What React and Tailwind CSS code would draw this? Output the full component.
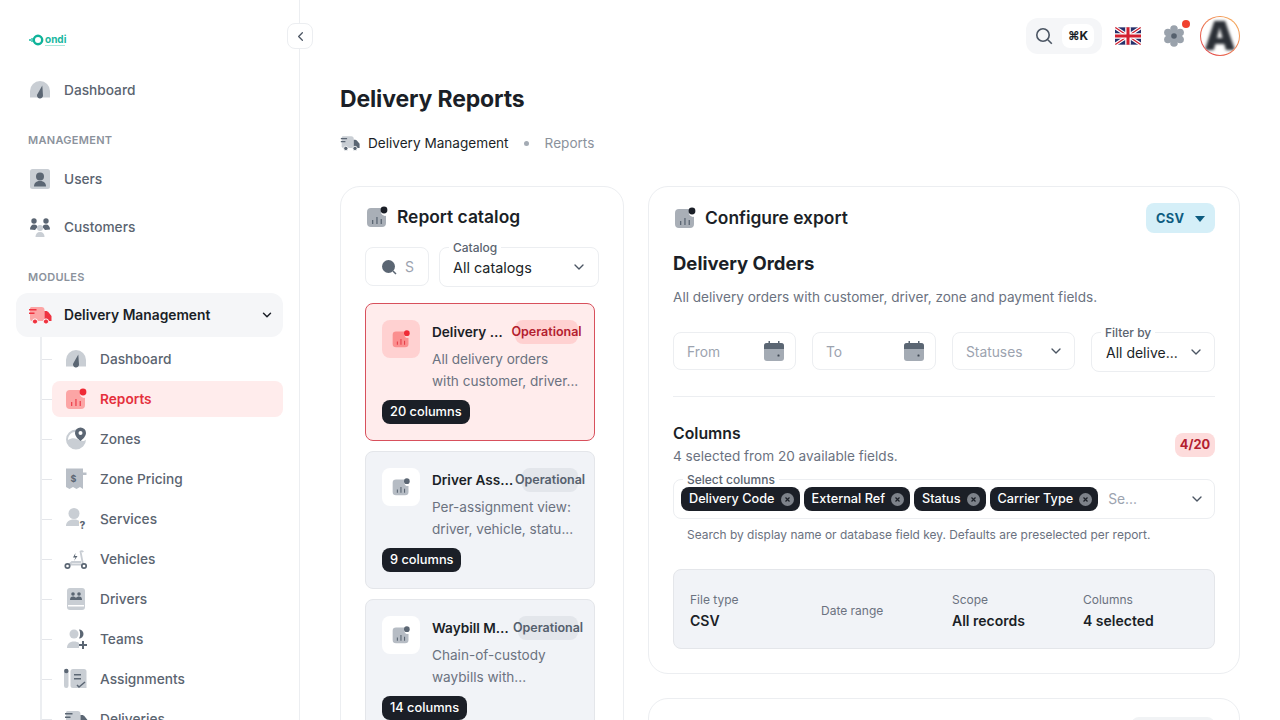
import React from "react";
import { ChevronLeft, ChevronDown } from "lucide-react";

const GaugeIcon = ({ light = "#c9ced4", dark = "#5b6673", size = 24 }) => (
  <svg width={size} height={size} viewBox="0 0 24 24">
    <path d="M2 19.500V13a10 10 0 0 1 20 0v6.500z" fill={light} />
    <path d="M14.300 7.500 15 17.500a3 3 0 1 1-5.800-1z" fill={dark} />
  </svg>
);

const UserCardIcon = () => (
  <svg width="24" height="24" viewBox="0 0 24 24">
    <rect x="2" y="2" width="20" height="20" rx="2.500" fill="#c9ced4" />
    <circle cx="12" cy="9.500" r="4" fill="#5b6673" />
    <path d="M6 19.500c0-3 1.500-5.500 6-5.500s6 2.500 6 5.500z" fill="#5b6673" />
  </svg>
);

const PeopleIcon = () => (
  <svg width="24" height="24" viewBox="0 0 24 24">
    <circle cx="6" cy="6" r="2.700" fill="#5b6673" />
    <circle cx="18" cy="6" r="2.700" fill="#5b6673" />
    <path d="M2 14.500c0-3 1.500-5 4-5s3 1 3.500 2.500L7 15z" fill="#5b6673" />
    <path d="M22 14.500c0-3-1.500-5-4-5s-3 1-3.500 2.500l2.500 3z" fill="#5b6673" />
    <circle cx="12" cy="13" r="3" fill="#c9ced4" />
    <path d="M7.500 22c0-3 1.500-5 4.500-5s4.500 2 4.500 5z" fill="#c9ced4" />
  </svg>
);

const TruckIcon = ({ light = "#c9ced4", dark = "#5b6673", size = 24 }) => (
  <svg width={size} height={size} viewBox="0 0 24 24">
    <path d="M3 4h10.500a3 3 0 0 1 3 3v11H4a2 2 0 0 1-2-2V5z" fill={light} />
    <path d="M16.500 8h1.500c1 0 2 .5 2.700 1.500L23.500 13v5h-7z" fill={dark} />
    <path d="M1 6h7.500v1.500H1zM1 9.500h5.500V11H1z" fill={dark} />
    <circle cx="7" cy="18.500" r="2.600" fill={dark} stroke="#ffffff" strokeWidth="1" />
    <circle cx="18" cy="18.500" r="2.600" fill={dark} stroke="#ffffff" strokeWidth="1" />
  </svg>
);

const ChartIcon = ({ light = "#a9afb7", dark = "#1b1f27", bar = "#5b6673", size = 24 }) => (
  <svg width={size} height={size} viewBox="0 0 24 24">
    <path d="M6 3h10v4a4 4 0 0 0 5 3.800V18a4 4 0 0 1-4 4H6a4 4 0 0 1-4-4V7a4 4 0 0 1 4-4z" fill={light} />
    <circle cx="19" cy="5" r="3.400" fill={dark} />
    <path d="M7 15h1.300v4H7zM11.300 12h1.300v7h-1.300zM15.600 14h1.300v5h-1.300z" fill={bar} />
  </svg>
);

const ZoneIcon = () => (
  <svg width="24" height="24" viewBox="0 0 24 24">
    <path d="M12 2.500a10 10 0 1 0 10 10c-3 3-6 1-9-.5s-6-1-9 1c0-5 4-8.500 8-8z" fill="#c9ced4" />
    <path d="M16.500 0.500a5.500 5.500 0 0 1 5.500 5.500c0 3-3 6-5.500 8-2.500-2-5.500-5-5.500-8a5.500 5.500 0 0 1 5.500-5.500z" fill="#5b6673" />
    <circle cx="16.500" cy="6" r="2" fill="#ffffff" />
  </svg>
);

const ReceiptIcon = () => (
  <svg width="24" height="24" viewBox="0 0 24 24">
    <path d="M2 1.500h17v4h3.500V8H19v14l-3-2-3.500 2-3.500-2-3.500 2L2 20z" fill="#b9bfc7" />
    <text x="6.500" y="15" fontSize="9" fontWeight="700" fill="#5b6673" fontFamily="Inter, sans-serif">$</text>
  </svg>
);

const UserHelpIcon = () => (
  <svg width="24" height="24" viewBox="0 0 24 24">
    <circle cx="10" cy="6.500" r="5.500" fill="#c9ced4" />
    <path d="M2 19c0-4 3-6.500 8-6.500 2 0 3.500.4 5 1.200V19z" fill="#c9ced4" />
    <text x="15.500" y="21.500" fontSize="10" fontWeight="800" fill="#5b6673" fontFamily="Inter, sans-serif">?</text>
  </svg>
);

const ScooterIcon = () => (
  <svg width="24" height="24" viewBox="0 0 24 24" fill="none">
    <path d="M5 17.500h13.500M19 17.500 16.500 4.500c1-.8 2-.5 2.800.5" stroke="#c9ced4" strokeWidth="1.800" />
    <path d="M5 17.500 8 15h9" stroke="#c9ced4" strokeWidth="1.800" />
    <path d="M11.500 6 9 10.500h2.500L10 14l3.500-5H11z" fill="#5b6673" />
    <circle cx="3.500" cy="19" r="2.200" stroke="#5b6673" strokeWidth="1.700" />
    <circle cx="20" cy="19" r="2.200" stroke="#5b6673" strokeWidth="1.700" />
  </svg>
);

const BadgeIcon = () => (
  <svg width="24" height="24" viewBox="0 0 24 24">
    <rect x="3" y="1" width="18" height="22" rx="3" fill="#c9ced4" />
    <circle cx="9" cy="7" r="1.800" fill="#5b6673" />
    <circle cx="15" cy="7" r="1.800" fill="#5b6673" />
    <path d="M6 13c0-2.500 1-3.500 3-3.500 1.300 0 2.300.5 3 1.500.7-1 1.700-1.500 3-1.500 2 0 3 1 3 3.500z" fill="#5b6673" />
    <path d="M4 18h16v1.500H4z" fill="#ffffff" />
  </svg>
);

const TeamAddIcon = () => (
  <svg width="24" height="24" viewBox="0 0 24 24">
    <circle cx="10" cy="7" r="4.500" fill="#c9ced4" />
    <path d="M15 2.500a4.500 4.500 0 0 1 0 9c1.500-2.500 1.500-6.500 0-9z" fill="#5b6673" />
    <path d="M3 21c0-4 2.500-6.500 7-6.500 2 0 4 .5 5 1.500v5z" fill="#c9ced4" />
    <path d="M18 14h2v3h3v2h-3v3h-2v-3h-3v-2h3z" fill="#5b6673" />
  </svg>
);

const TaskIcon = () => (
  <svg width="24" height="24" viewBox="0 0 24 24">
    <rect x="0" y="2" width="4.500" height="19" rx="2.200" fill="#c9ced4" />
    <circle cx="2.300" cy="4" r="2.200" fill="#5b6673" />
    <path d="M9 2h11a2.500 2.500 0 0 1 2.500 2.500V21H9a2.500 2.500 0 0 1-2.500-2.500v-14A2.500 2.500 0 0 1 9 2z" fill="#c9ced4" />
    <path d="M10 7h7v1.500h-7zM10 11h7v1.500h-7z" fill="#5b6673" />
    <path d="m13 18 2 2 6-5" stroke="#5b6673" strokeWidth="1.500" fill="none" />
  </svg>
);

const CalendarIcon = () => (
  <svg width="20" height="20" viewBox="0 0 20 20">
    <rect x="0" y="2" width="20" height="18" rx="3" fill="#a4abb4" />
    <path d="M3 2h14a3 3 0 0 1 3 3v3H0V5a3 3 0 0 1 3-3z" fill="#5b6673" />
    <rect x="4.500" y="0" width="1.500" height="3" fill="#5b6673" />
    <rect x="14" y="0" width="1.500" height="3" fill="#5b6673" />
    <rect x="13.500" y="13.500" width="2" height="2" rx="0.500" fill="#3f4853" />
  </svg>
);

const GearIcon = () => (
  <svg width="22" height="22" viewBox="0 0 22 22">
    <g fill="#9aa2ac">
      <circle cx="11" cy="4" r="3.800" />
      <circle cx="17.100" cy="7.500" r="3.800" />
      <circle cx="17.100" cy="14.500" r="3.800" />
      <circle cx="11" cy="18" r="3.800" />
      <circle cx="4.900" cy="14.500" r="3.800" />
      <circle cx="4.900" cy="7.500" r="3.800" />
      <circle cx="11" cy="11" r="6" />
    </g>
    <circle cx="11" cy="11" r="2.800" fill="#55606d" />
  </svg>
);

const FlagUk = () => (
  <svg className="rounded-[3px]" width="26" height="20" viewBox="0 0 60 40">
    <rect width="60" height="40" fill="#27306b" />
    <path d="M0 0 60 40M60 0 0 40" stroke="#ffffff" strokeWidth="8" />
    <path d="M0 0 60 40M60 0 0 40" stroke="#d3202f" strokeWidth="3" />
    <path d="M30 0v40M0 20h60" stroke="#ffffff" strokeWidth="13" />
    <path d="M30 0v40M0 20h60" stroke="#d3202f" strokeWidth="7" />
  </svg>
);

const Logo = () => (
  <div className="flex items-center h-[14px] ml-[1px]">
    <svg width="15" height="14" viewBox="0 0 15 14" fill="none">
      <circle cx="1" cy="7" r="1" fill="#14b8a0" />
      <path d="M3 5v4" stroke="#14b8a0" strokeWidth="1.300" />
      <circle cx="9" cy="7" r="4.200" stroke="#0fb39a" strokeWidth="2.400" />
    </svg>
    <div className="flex flex-col ml-[1px]">
      <span className="text-[10px] leading-[9px] font-bold text-[#19b79f]">ondi</span>
      <span className="w-5 h-px mt-px bg-[#a6e6da]" />
    </div>
  </div>
);

const mainLinks = [
  { label: "Dashboard", icon: <GaugeIcon /> },
];

const managementLinks = [
  { label: "Users", icon: <UserCardIcon /> },
  { label: "Customers", icon: <PeopleIcon /> },
];

const subLinks = [
  { label: "Dashboard", icon: <GaugeIcon /> },
  { label: "Reports", icon: <ChartIcon light="#fca5a5" dark="#ef2b36" bar="#ef4450" />, active: true },
  { label: "Zones", icon: <ZoneIcon /> },
  { label: "Zone Pricing", icon: <ReceiptIcon /> },
  { label: "Services", icon: <UserHelpIcon /> },
  { label: "Vehicles", icon: <ScooterIcon /> },
  { label: "Drivers", icon: <BadgeIcon /> },
  { label: "Teams", icon: <TeamAddIcon /> },
  { label: "Assignments", icon: <TaskIcon /> },
  { label: "Deliveries", icon: <TruckIcon /> },
];

const NavRow = ({ label, icon }) => (
  <a className="flex items-center gap-3 h-11 px-3 rounded-lg text-[13.7px] font-medium text-[#5b6470]">
    {icon}
    <span>{label}</span>
  </a>
);

const Sidebar = () => (
  <aside className="relative w-[300px] h-screen shrink-0 border-r border-[#eceef1] bg-white">
    <button className="absolute top-[23px] -right-[14px] z-10 flex items-center justify-center w-[26px] h-[26px] rounded-lg border border-[#eceef1] bg-white text-[#4b5563]">
      <ChevronLeft size={15} />
    </button>
    <div className="h-[68px] pl-7 pt-[33px]">
      <Logo />
    </div>
    <nav className="px-4">
      {mainLinks.map((l) => (
        <NavRow key={l.label} {...l} />
      ))}
      <div className="mt-5 mb-[9px] px-3 h-4 text-[11px] leading-4 font-semibold tracking-[0.3px] text-[#8b929c]">MANAGEMENT</div>
      <div className="flex flex-col gap-1">
        {managementLinks.map((l) => (
          <NavRow key={l.label} {...l} />
        ))}
      </div>
      <div className="mt-5 mb-2 px-3 h-4 text-[11px] leading-4 font-semibold tracking-[0.3px] text-[#8b929c]">MODULES</div>
      <a className="flex items-center gap-3 h-11 px-3 rounded-xl bg-[#f5f6f8] text-[13.8px] font-semibold text-[#1b1f27]">
        <TruckIcon light="#fca5a5" dark="#ef3340" />
        <span className="flex-1">Delivery Management</span>
        <ChevronDown size={14} strokeWidth={2.5} className="-mr-[3px]" />
      </a>
      <div className="ml-6 pt-1 pl-[10px] flex flex-col gap-1 border-l-2 border-[#eceef1]">
        {subLinks.map((l) => (
          <a
            key={l.label}
            className={
              l.active
                ? "relative flex items-center gap-3 h-9 px-3 rounded-lg bg-[#ffecec] text-[13.7px] font-semibold text-[#e5303c]"
                : "relative flex items-center gap-3 h-9 px-3 rounded-lg text-[13.7px] font-medium text-[#5b6470]"
            }
          >
            <span className="absolute -left-[10px] top-[18px] w-[10px] h-px bg-[#e4e6ea]" />
            {l.icon}
            <span>{l.label}</span>
          </a>
        ))}
      </div>
    </nav>
  </aside>
);

const TopBar = () => (
  <div className="flex items-center justify-end h-[72px]">
    <div className="flex items-center gap-[9px] w-[76px] h-9 pl-[9px] rounded-xl bg-[#f5f6f8]">
      <svg width="18" height="18" viewBox="0 0 18 18" fill="none" stroke="#4b5563" strokeWidth="1.600">
        <circle cx="8" cy="8" r="6.200" />
        <path d="m12.800 12.800 4 4" />
      </svg>
      <span className="flex items-center justify-center w-8 h-6 rounded-lg bg-white text-xs font-bold text-[#1b1f27]">⌘K</span>
    </div>
    <div className="ml-[13px]">
      <FlagUk />
    </div>
    <div className="relative ml-[22px] mr-[15px]">
      <GearIcon />
      <span className="absolute -top-[5px] -right-[5px] w-2 h-2 rounded-full bg-[#f0412f]" />
    </div>
    <div className="w-10 h-10 p-px rounded-full bg-linear-to-bl from-[#f5b45a] to-[#e0364a]">
      <div className="flex items-center justify-center w-full h-full rounded-full bg-white overflow-hidden">
        <span className="text-[40px] leading-none font-black text-[#2b2f36] blur-[1.5px]">A</span>
      </div>
    </div>
  </div>
);

const reports = [
  {
    title: "Delivery Orders",
    desc: "All delivery orders\nwith customer, driver...",
    columns: "20 columns",
    active: true,
    pill: "w-[63px]",
  },
  {
    title: "Driver Assignments",
    desc: "Per-assignment view:\ndriver, vehicle, statu...",
    columns: "9 columns",
    pill: "w-[56px]",
  },
  {
    title: "Waybill Manifest",
    desc: "Chain-of-custody\nwaybills with...",
    columns: "14 columns",
    pill: "w-[60px]",
  },
];

const ReportCard = ({ title, desc, columns, active, pill }) => (
  <div
    className={
      active
        ? "p-4 h-[138px] rounded-lg border border-[#d8505c] bg-[#ffecec]"
        : "p-4 h-[138px] rounded-lg border border-[#e4e6ea] bg-[#f1f3f7]"
    }
  >
    <div className="flex gap-3">
      <div
        className={
          active
            ? "flex items-center justify-center shrink-0 w-[38px] h-[38px] rounded-lg bg-[#ffd1d1]"
            : "flex items-center justify-center shrink-0 w-[38px] h-[38px] rounded-lg bg-white"
        }
      >
        {active ? (
          <ChartIcon light="#fb8f8f" dark="#ef2b36" bar="#e5404a" size={20} />
        ) : (
          <ChartIcon light="#b6bcc4" dark="#5b6673" bar="#5b6673" size={20} />
        )}
      </div>
      <div className="flex-1 min-w-0">
        <div className="flex items-start justify-between gap-2">
          <div className="flex-1 min-w-0 h-6 text-[13.6px] leading-6 font-semibold text-[#1b1f27] truncate">{title}</div>
          <div
            className={
              (active ? "bg-[#ffd1d1] text-[#b3202f] " : "bg-[#e3e6eb] text-[#55606d] ") +
              pill +
              " flex justify-center shrink-0 h-6 rounded-lg text-[12.5px] leading-6 font-semibold whitespace-nowrap"
            }
          >
            {"Operational"}
          </div>
        </div>
        <p className="mt-[4px] text-[13.6px] leading-[22px] text-[#6b7280] whitespace-pre">{desc}</p>
      </div>
    </div>
    <span className="inline-flex items-center h-6 mt-[8px] px-2 rounded-lg bg-[#1b1f27] text-[12.8px] font-medium text-white">{columns}</span>
  </div>
);

const Catalog = () => (
  <section className="w-[284px] shrink-0 p-6 rounded-[20px] border border-[#eceef1]">
    <div className="flex items-center gap-2 h-6 -mt-[6px] mb-[18px]">
      <ChartIcon />
      <h2 className="text-[17.4px] font-semibold text-[#1b1f27]">Report catalog</h2>
    </div>
    <div className="flex items-start gap-[10px]">
      <div className="flex items-center gap-2 w-[64px] h-[39px] pl-[15px] rounded-lg border border-[#eceef1]">
        <svg className="shrink-0" width="16" height="16" viewBox="0 0 16 16">
          <circle cx="7.500" cy="7.500" r="6.500" fill="#5b6673" />
          <path d="m12 12 3 3" stroke="#5b6673" strokeWidth="1.500" />
        </svg>
        <span className="text-sm text-[#9ca3af]">S</span>
      </div>
      <div className="relative flex items-center justify-between flex-1 h-10 pl-[13px] pr-[11px] rounded-lg border border-[#eceef1]">
        <span className="absolute -top-[7px] left-[9px] px-1 bg-white text-xs leading-[14px] font-medium text-[#5b6470]">Catalog</span>
        <span className="text-[14.4px] text-[#1b1f27] pt-[2px]">All catalogs</span>
        <ChevronDown size={16} className="text-[#4b5563]" />
      </div>
    </div>
    <div className="flex flex-col gap-[10px] mt-4 w-[230px]">
      {reports.map((r) => (
        <ReportCard key={r.title} {...r} />
      ))}
    </div>
  </section>
);

const DateField = ({ label, className }) => (
  <div className={"flex items-center justify-between h-[38px] pl-[13px] pr-[11px] rounded-lg border border-[#eceef1] " + className}>
    <span className="pt-[2px] text-[13.8px] text-[#9ca3af]">{label}</span>
    <CalendarIcon />
  </div>
);

const Chip = ({ label }) => (
  <span className="flex items-center gap-[6px] h-6 pl-2 pr-[6px] rounded-lg bg-[#1b1f27] text-[12.7px] font-medium text-white whitespace-nowrap">
    {label}
    <svg width="13" height="13" viewBox="0 0 13 13">
      <circle cx="6.500" cy="6.500" r="6.500" fill="#7d828a" />
      <path d="m4.500 4.500 4 4m0-4-4 4" stroke="#1b1f27" strokeWidth="1.200" />
    </svg>
  </span>
);

const summary = [
  { label: "File type", value: "CSV" },
  { label: "Date range" },
  { label: "Scope", value: "All records" },
  { label: "Columns", value: "4 selected" },
];

const ConfigureExport = () => (
  <section className="h-[488px] p-6 rounded-[20px] border border-[#eceef1]">
    <div className="flex items-center justify-between -mt-[8px] h-[30px]">
      <div className="flex items-center gap-2">
        <ChartIcon />
        <h2 className="text-[17.4px] font-semibold text-[#1b1f27]">Configure export</h2>
      </div>
      <button className="flex items-center gap-[11px] w-[69px] h-[30px] pl-[10px] pt-[1px] rounded-lg bg-[#d5eff8] text-[12.8px] font-bold tracking-[0.3px] text-[#0d5c80]">
        CSV
        <svg width="10" height="6" viewBox="0 0 10 6">
          <path d="M0 0h10L5 6z" fill="#0d5c80" />
        </svg>
      </button>
    </div>
    <h3 className="mt-4 text-[18.5px] font-bold leading-7 text-[#1b1f27]">Delivery Orders</h3>
    <p className="mt-[10px] text-[13.6px] leading-5 text-[#6b7280]">All delivery orders with customer, driver, zone and payment fields.</p>
    <div className="flex items-start gap-4 mt-[25px]">
      <DateField label="From" className="w-[123px]" />
      <DateField label="To" className="w-[124px]" />
      <div className="flex items-center justify-between w-[123px] h-[38px] pl-[13px] pr-[10px] rounded-lg border border-[#eceef1]">
        <span className="pt-[2px] text-[13.8px] text-[#9ca3af]">Statuses</span>
        <ChevronDown size={16} className="text-[#4b5563]" />
      </div>
      <div className="relative flex items-center justify-between w-[124px] h-10 pl-[14px] pr-[10px] rounded-lg border border-[#eceef1]">
        <span className="absolute -top-[7px] left-[9px] px-1 bg-white text-xs leading-[14px] font-medium text-[#5b6470]">Filter by</span>
        <span className="text-sm text-[#1b1f27] truncate pt-[1px]">All delive...</span>
        <ChevronDown size={16} className="shrink-0 text-[#4b5563]" />
      </div>
    </div>
    <div className="h-px mt-6 bg-[#eceef1]" />
    <div className="flex items-center justify-between mt-[27px]">
      <div>
        <h4 className="text-[15.8px] font-semibold leading-5 text-[#1b1f27]">Columns</h4>
        <p className="mt-[2px] text-[13.6px] leading-5 text-[#6b7280]">4 selected from 20 available fields.</p>
      </div>
      <span className="flex items-center justify-center w-10 h-6 rounded-lg bg-[#fddcdc] text-[12.8px] font-bold text-[#b3202f]">4/20</span>
    </div>
    <div className="relative flex items-center gap-1 h-10 mt-[13px] pl-[7px] pr-[9px] rounded-lg border border-[#eceef1]">
      <span className="absolute -top-[7px] left-[9px] px-1 bg-white text-xs leading-[14px] font-medium text-[#5b6470]">Select columns</span>
      <Chip label="Delivery Code" />
      <Chip label="External Ref" />
      <Chip label="Status" />
      <Chip label="Carrier Type" />
      <span className="ml-[6px] flex-1 text-[13.8px] text-[#9ca3af]">Se...</span>
      <ChevronDown size={16} className="text-[#4b5563]" />
    </div>
    <p className="mt-2 pl-[14px] text-[11.95px] leading-4 text-[#6b7280]">Search by display name or database field key. Defaults are preselected per report.</p>
    <div className="grid grid-cols-4 gap-4 items-center h-20 mt-[26px] pt-[4px] px-4 rounded-lg border border-[#e4e6ea] bg-[#f1f3f7]">
      {summary.map((s) => (
        <div key={s.label}>
          <div className="text-xs leading-4 text-[#6b7280]">{s.label}</div>
          {s.value && <div className="mt-[3px] text-sm leading-5 font-semibold text-[#1b1f27]">{s.value}</div>}
        </div>
      ))}
    </div>
  </section>
);

const App = () => (
  <div className="flex h-screen overflow-hidden bg-white font-['Inter',sans-serif]">
    <Sidebar />
    <main className="flex-1 min-w-0 px-10">
      <TopBar />
      <h1 className="mt-[11px] text-[23px] leading-8 font-bold tracking-[-0.15px] text-[#1b1f27]">Delivery Reports</h1>
      <div className="flex items-center mt-4 h-6 text-[13.6px]">
        <TruckIcon size={20} />
        <span className="ml-2 font-normal text-[#1b1f27]">Delivery Management</span>
        <span className="ml-[15px] mr-4 w-[5px] h-[5px] rounded-full bg-[#a4abb4]" />
        <span className="text-[#8b929c]">Reports</span>
      </div>
      <div className="flex items-start gap-6 mt-[31px]">
        <Catalog />
        <div className="flex flex-col flex-1 min-w-0 gap-6">
          <ConfigureExport />
          <section className="relative h-40 rounded-[20px] border border-[#eceef1]">
            <span className="absolute top-[18px] right-6 w-[84px] h-8 rounded-lg bg-[#f1f3f5]" />
          </section>
        </div>
      </div>
    </main>
  </div>
);

export default App;
